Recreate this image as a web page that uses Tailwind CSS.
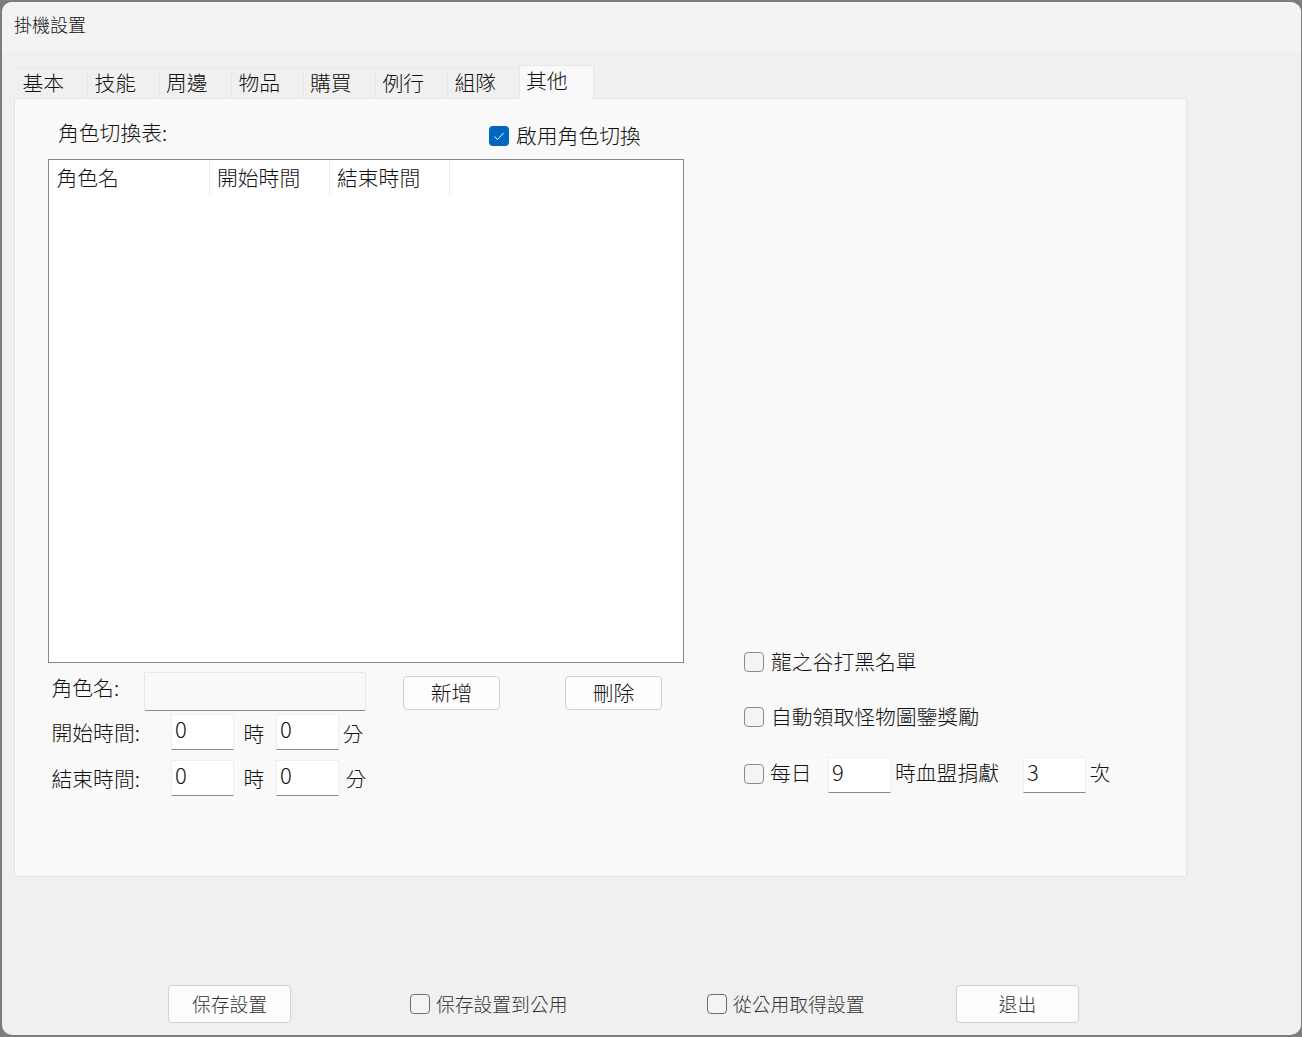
<!DOCTYPE html>
<html lang="zh-Hant">
<head>
    <meta charset="UTF-8">
    <title>掛機設置</title>
    <script src="https://cdn.jsdelivr.net/npm/@tailwindcss/browser@4"></script>
</head>
<body class="bg-[#7c7c7c] overflow-hidden">
<div class="w-[1302px] h-[1037px] box-border border-2 border-r-[1px] border-[#7c7c7c] rounded-[12px] bg-[#f0f0f0] overflow-hidden text-[20.8px] leading-[28px] text-[#111111] font-light font-['Noto_Sans_CJK_TC','Noto_Sans',sans-serif]">

    <!-- title bar -->
    <div class="h-[50px] bg-[#f3f3f3] pl-[12px] pt-[8px] text-[18px] leading-[28px]">掛機設置</div>

    <!-- tabs -->
    <div class="h-[46px] flex items-end pl-[14px]">
        <div class="w-[72px] h-[31px] pl-[6.5px] border-r border-t border-[#e8e8e8] bg-[#f0f0f0]">基本</div>
        <div class="w-[72px] h-[31px] pl-[6.5px] border-r border-t border-[#e8e8e8] bg-[#f0f0f0]">技能</div>
        <div class="w-[72px] h-[31px] pl-[6px] border-r border-t border-[#e8e8e8] bg-[#f0f0f0]">周邊</div>
        <div class="w-[72px] h-[31px] pl-[6.5px] border-r border-t border-[#e8e8e8] bg-[#f0f0f0]">物品</div>
        <div class="w-[72px] h-[31px] pl-[6px] border-r border-t border-[#e8e8e8] bg-[#f0f0f0]">購買</div>
        <div class="w-[72px] h-[31px] pl-[6.5px] border-r border-t border-[#e8e8e8] bg-[#f0f0f0]">例行</div>
        <div class="w-[71px] h-[31px] pl-[6.5px] border-t border-[#e8e8e8] bg-[#f0f0f0]">組隊</div>
        <div class="w-[75px] h-[34px] pl-[6px] border-x border-t border-[#e8e8e8] bg-[#f9f9f9] -mb-px relative leading-[28px]">其他</div>
    </div>

    <!-- panel -->
    <div class="w-[1173px] h-[779px] ml-[12px] box-border border border-[#e5e5e5] bg-[#f9f9f9] flex">

        <!-- left column -->
        <div class="w-[670px] pl-[33px]">
            <div class="h-[60px] flex">
                <div class="w-[108px] ml-[10px] mt-[19px] whitespace-nowrap">角色切換表:</div>
                <label class="ml-[323px] mt-[23px] h-[28px] flex items-center">
                    <span class="w-[20px] h-[20px] rounded-[4px] bg-[#0067c0] flex items-center justify-center">
                        <svg width="12" height="12" viewBox="0 0 12 12" fill="none" stroke="#ffffff" stroke-width="1"><path d="M1.5 6.5 L4.5 9.5 L10.5 3"/></svg>
                    </span>
                    <span class="ml-[7px] pb-[2px]">啟用角色切換</span>
                </label>
            </div>

            <!-- table -->
            <div class="w-[636px] h-[504px] box-border border border-[#828790] bg-white">
                <div class="flex h-[35px]">
                    <div class="w-[161px] pl-[7.5px] pt-[3px] border-r border-[#eeeeee]">角色名</div>
                    <div class="w-[120px] pl-[7px] pt-[3px] border-r border-[#eeeeee]">開始時間</div>
                    <div class="w-[120px] pl-[7px] pt-[3px] border-r border-[#eeeeee]">結束時間</div>
                </div>
            </div>

            <!-- form -->
            <div class="flex h-[51px] pt-[9px]">
                <div class="w-[96px] pl-[3.5px] pt-[1px]">角色名:</div>
                <div class="w-[222px] h-[39px] box-border border border-[#e8e8e8] border-b-[#8a8a8a] bg-[#f9f9f9] rounded-[2px]"></div>
                <button class="ml-[37px] mt-[4px] w-[97px] h-[34px] pb-[2px] border border-[#d0d0d0] rounded-[4px] bg-[#fdfdfd]">新增</button>
                <button class="ml-[65px] mt-[4px] w-[97px] h-[34px] pb-[2px] border border-[#d0d0d0] rounded-[4px] bg-[#fdfdfd]">刪除</button>
            </div>
            <div class="flex h-[46px]">
                <div class="w-[123px] pl-[3.5px] pt-[4px]">開始時間:</div>
                <div class="w-[63px] h-[36px] box-border border border-[#eeeeee] border-b-[#8a8a8a] bg-white pl-[3px] text-[22px] leading-[26px]">0</div>
                <div class="ml-[9.5px] w-[32.5px] pt-[5px]">時</div>
                <div class="w-[63px] h-[36px] box-border border border-[#eeeeee] border-b-[#8a8a8a] bg-white pl-[3px] text-[22px] leading-[26px]">0</div>
                <div class="ml-[3.5px] pt-[5px]">分</div>
            </div>
            <div class="flex h-[46px]">
                <div class="w-[123px] pl-[3.5px] pt-[4px]">結束時間:</div>
                <div class="w-[63px] h-[36px] box-border border border-[#eeeeee] border-b-[#8a8a8a] bg-white pl-[3px] text-[22px] leading-[26px]">0</div>
                <div class="ml-[9.5px] w-[32.5px] pt-[4px]">時</div>
                <div class="w-[63px] h-[36px] box-border border border-[#eeeeee] border-b-[#8a8a8a] bg-white pl-[3px] text-[22px] leading-[26px]">0</div>
                <div class="ml-[6.5px] pt-[4px]">分</div>
            </div>
        </div>

        <!-- right column -->
        <div class="pl-[59px] pt-[549px]">
            <label class="flex items-center h-[28px]">
                <span class="w-[20px] h-[20px] box-border border border-[#8a8a8a] rounded-[4px] bg-[#f4f4f4]"></span>
                <span class="ml-[7px] pb-[2px]">龍之谷打黑名單</span>
            </label>
            <label class="flex items-center h-[28px] mt-[27px]">
                <span class="w-[20px] h-[20px] box-border border border-[#8a8a8a] rounded-[4px] bg-[#f4f4f4]"></span>
                <span class="ml-[7px] pb-[2px]">自動領取怪物圖鑒獎勵</span>
            </label>
            <div class="flex h-[36px] mt-[26px]">
                <span class="mt-[7px] w-[20px] h-[20px] box-border border border-[#8a8a8a] rounded-[4px] bg-[#f4f4f4]"></span>
                <span class="ml-[6px] w-[58px] pt-[1px]">每日</span>
                <div class="w-[63px] h-[36px] box-border border border-[#eeeeee] border-b-[#8a8a8a] bg-white pl-[3px] text-[22px] leading-[26px]">9</div>
                <span class="ml-[4px] w-[128px] pt-[1px] whitespace-nowrap">時血盟捐獻</span>
                <div class="w-[63px] h-[36px] box-border border border-[#eeeeee] border-b-[#8a8a8a] bg-white pl-[3px] text-[22px] leading-[26px]">3</div>
                <span class="ml-[3.5px] pt-[1px]">次</span>
            </div>
        </div>
    </div>

    <!-- footer -->
    <div class="flex pt-[108px] pl-[166px] text-[18.8px] text-[#333333]">
        <button class="w-[123px] h-[38px] border border-[#d0d0d0] rounded-[4px] bg-[#fdfdfd]">保存設置</button>
        <label class="ml-[119px] h-[38px] w-[297px] flex items-center">
            <span class="w-[20px] h-[20px] box-border border border-[#6e6e6e] rounded-[4px] bg-[#f4f4f4]"></span>
            <span class="ml-[6px]">保存設置到公用</span>
        </label>
        <label class="h-[38px] w-[249px] flex items-center">
            <span class="w-[20px] h-[20px] box-border border border-[#6e6e6e] rounded-[4px] bg-[#f4f4f4]"></span>
            <span class="ml-[6px]">從公用取得設置</span>
        </label>
        <button class="w-[123px] h-[38px] border border-[#d0d0d0] rounded-[4px] bg-[#fdfdfd]">退出</button>
    </div>
</div>
</body>
</html>
